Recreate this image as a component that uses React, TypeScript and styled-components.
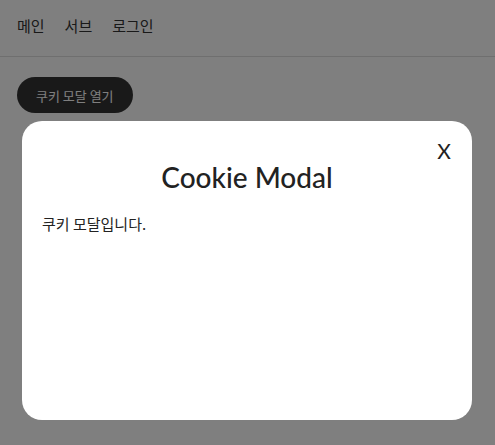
import React from "react";
import styled, { createGlobalStyle } from "styled-components";

const Global = createGlobalStyle`
  html, body { margin: 0; padding: 0; background: #fff; }
  body { font-family: "Lato", "Noto Sans CJK KR", sans-serif; color: #333; }
  * { box-sizing: border-box; }
`;

const Header = styled.header`
  height: 57px;
  padding: 0 17px;
  display: flex;
  align-items: center;
  gap: 20px;
  border-bottom: 1px solid #dedede;
`;

const NavLink = styled.a`
  font-family: "Noto Sans CJK KR", sans-serif;
  font-size: 15px;
  color: #333;
  text-decoration: none;
  padding-bottom: 6px;
`;

const Main = styled.main`
  padding: 20px 17px;
`;

const OpenButton = styled.button`
  height: 36px;
  padding: 0 19px;
  border: none;
  border-radius: 18px;
  background: #333;
  color: #fff;
  font-family: "Noto Sans CJK KR", sans-serif;
  font-size: 13px;
`;

const Overlay = styled.div`
  position: fixed;
  inset: 0;
  background: rgba(0, 0, 0, 0.5);
`;

const Modal = styled.div`
  position: fixed;
  top: 121px;
  left: 22px;
  width: 450px;
  height: 299px;
  background: #fff;
  border-radius: 20px;
  padding: 39px 20px 20px;
`;

const Close = styled.button`
  position: absolute;
  top: 17px;
  right: 21px;
  border: none;
  background: none;
  padding: 0;
  font-family: "Lato", sans-serif;
  font-size: 21px;
  color: #222;
`;

const Title = styled.h2`
  margin: 0;
  text-align: center;
  font-size: 28px;
  font-weight: 500;
  color: #222;
`;

const Body = styled.p`
  margin: 19px 0 0;
  font-family: "Noto Sans CJK KR", sans-serif;
  font-size: 15px;
  color: #222;
`;

export default function App() {
  return (
    <>
      <Global />
      <Header>
        <NavLink>메인</NavLink>
        <NavLink>서브</NavLink>
        <NavLink>로그인</NavLink>
      </Header>
      <Main>
        <OpenButton>쿠키 모달 열기</OpenButton>
      </Main>
      <Overlay />
      <Modal>
        <Close>X</Close>
        <Title>Cookie Modal</Title>
        <Body>쿠키 모달입니다.</Body>
      </Modal>
    </>
  );
}
